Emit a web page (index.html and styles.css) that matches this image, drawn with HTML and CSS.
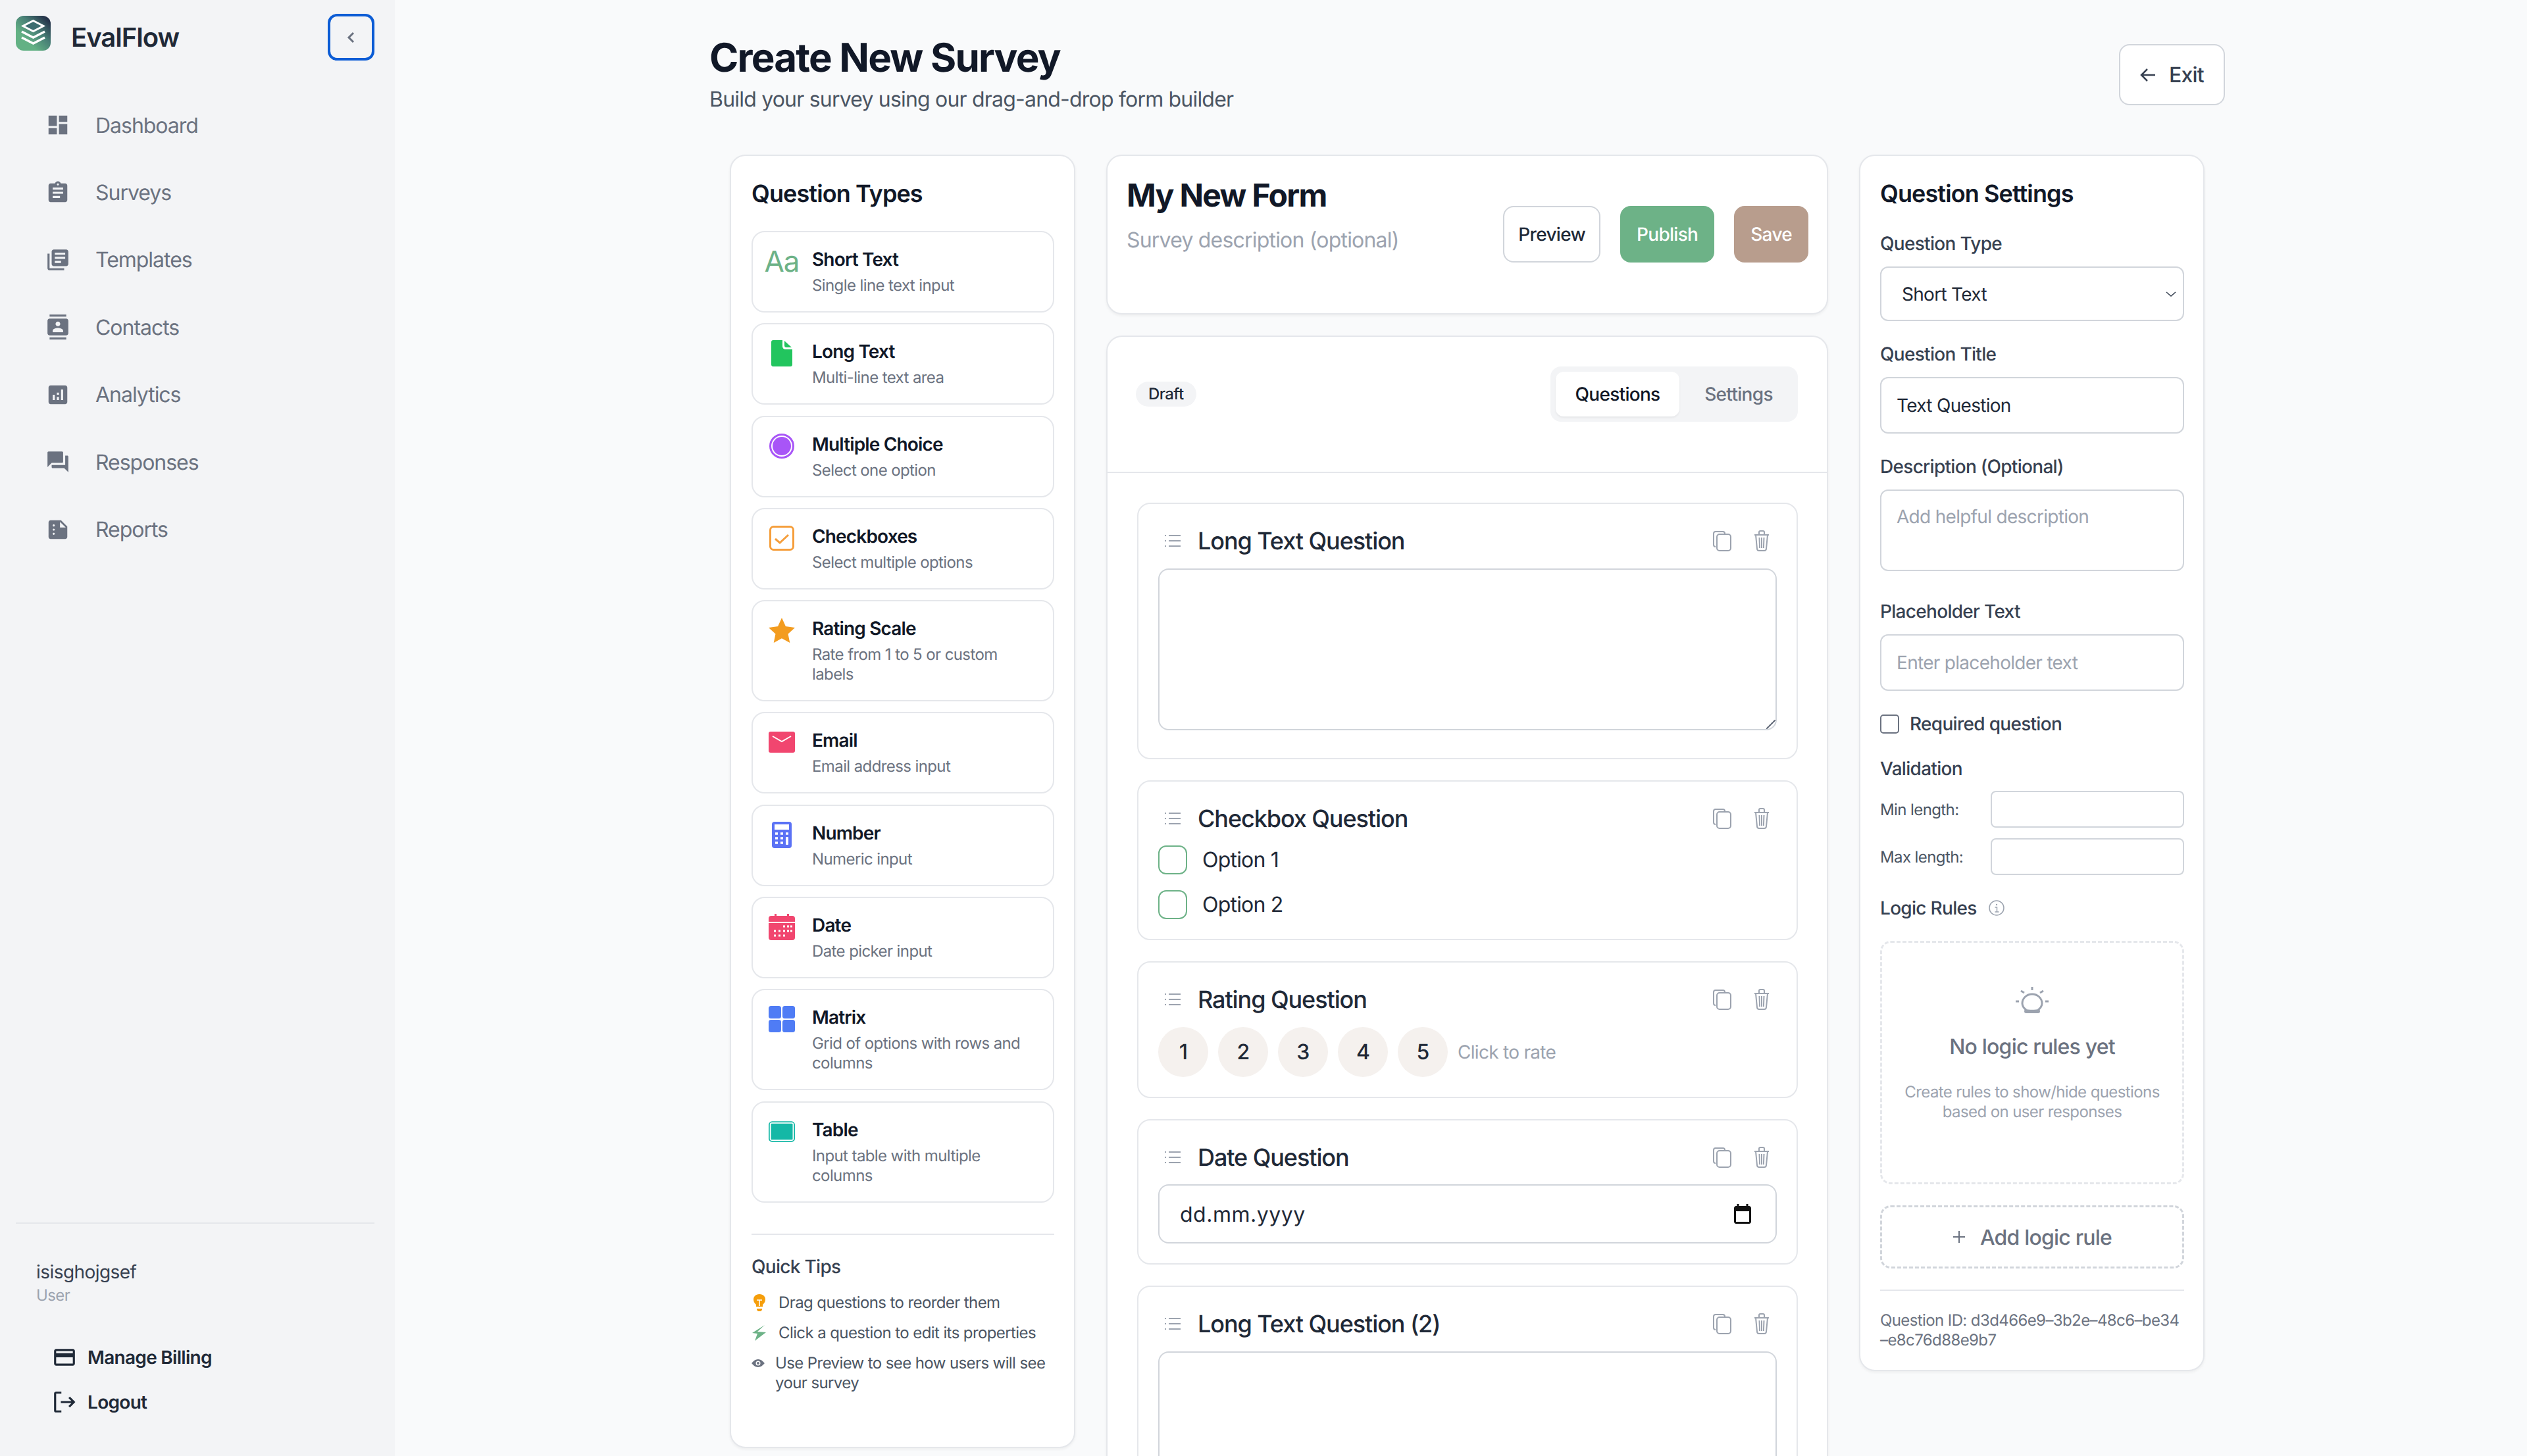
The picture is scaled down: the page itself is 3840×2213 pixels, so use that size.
FILE: index.html
```html
<!DOCTYPE html>
<html lang="en">
<head>
  <meta charset="UTF-8" />
  <meta name="viewport" content="width=device-width, initial-scale=1.0"/>
  <title>Create New Survey - EvalFlow</title>
  <link rel="stylesheet" href="styles.css">
</head>
<body>
  <svg class="defs" aria-hidden="true">
    <symbol id="i-drag" viewBox="0 0 26 26">
      <path d="M1 5h2M1 13h2M1 21h2M7 5h18M7 13h18M7 21h18" fill="none" stroke="#9ca3af" stroke-width="2"/>
    </symbol>
    <symbol id="i-copy" viewBox="0 0 28 32">
      <path d="M4 25c-2 0-3-1-3-3V5c0-2 1-3 3-3h11c2 0 3 1 3 3" fill="none" stroke="#9ca3af" stroke-width="2"/>
      <rect x="6" y="6" width="21" height="25" rx="4" fill="none" stroke="#9ca3af" stroke-width="2"/>
    </symbol>
    <symbol id="i-trash" viewBox="0 0 24 32">
      <path d="M1 7h22M8 7V3c0-1 .6-2 2-2h4c1.400 0 2 1 2 2v4M3 7l2 21c.1 1.500 1 3 3 3h8c2 0 2.900-1.500 3-3l2-21M8.500 11l.6 16M12 11v16M15.500 11l-.6 16" fill="none" stroke="#9ca3af" stroke-width="2"/>
    </symbol>
  </svg>

  <div class="app">
    <aside class="sidebar">
      <div class="brand-row">
        <div class="brand">
          <svg class="logo" viewBox="0 0 53 53">
            <defs>
              <linearGradient id="logo-grad" x1="0" y1="1" x2="1" y2="0">
                <stop offset="0.3" stop-color="#63b184"/>
                <stop offset="0.6" stop-color="#487f76"/>
                <stop offset="0.9" stop-color="#25334a"/>
              </linearGradient>
            </defs>
            <rect width="53" height="53" rx="12" fill="url(#logo-grad)"/>
            <path d="M26.500 7.500L42 15.500 26.500 23.500 11 15.500z" fill="#3c6d70" stroke="#fff" stroke-width="3"/>
            <path d="M9 24l17.500 9L44 24M9 33l17.500 9L44 33" fill="none" stroke="#fff" stroke-width="3.500"/>
          </svg>
          <span class="brand-name">EvalFlow</span>
        </div>
        <button class="collapse-btn">
          <svg width="28" height="28" viewBox="0 0 28 28"><path d="M17 7l-7 7 7 7" fill="none" stroke="#6b7280" stroke-width="3"/></svg>
        </button>
      </div>

      <nav class="nav">
        <a class="nav-item" href="#">
          <svg viewBox="0 0 24 24"><path d="M3 13h8V3H3v10zm0 8h8v-6H3v6zm10 0h8V11h-8v10zm0-18v6h8V3h-8z"/></svg>
          Dashboard
        </a>
        <a class="nav-item" href="#">
          <svg viewBox="0 0 24 24"><path d="M19 3h-4.180C14.400 1.840 13.300 1 12 1c-1.300 0-2.400.84-2.820 2H5c-1.100 0-2 .9-2 2v14c0 1.100.9 2 2 2h14c1.100 0 2-.9 2-2V5c0-1.100-.9-2-2-2zm-7 0c.55 0 1 .45 1 1s-.45 1-1 1-1-.45-1-1 .45-1 1-1zm2 14H7v-2h7v2zm3-4H7v-2h10v2zm0-4H7V7h10v2z"/></svg>
          Surveys
        </a>
        <a class="nav-item" href="#">
          <svg viewBox="0 0 24 24"><path d="M4 6H2v14c0 1.100.9 2 2 2h14v-2H4V6zm16-4H8c-1.100 0-2 .9-2 2v12c0 1.100.9 2 2 2h12c1.100 0 2-.9 2-2V4c0-1.100-.9-2-2-2zm-1 9H9V9h10v2zm-4 4H9v-2h6v2zm4-8H9V5h10v2z"/></svg>
          Templates
        </a>
        <a class="nav-item" href="#">
          <svg viewBox="0 0 24 24"><path d="M20 0H4v2h16V0zM4 24h16v-2H4v2zM20 4H4c-1.100 0-2 .9-2 2v12c0 1.100.9 2 2 2h16c1.100 0 2-.9 2-2V6c0-1.100-.9-2-2-2zm-8 2.750c1.240 0 2.250 1.010 2.250 2.250s-1.010 2.250-2.250 2.250S9.750 10.240 9.750 9 10.760 6.750 12 6.750zM17 17H7v-1.500c0-1.670 3.330-2.500 5-2.500s5 .83 5 2.500V17z"/></svg>
          Contacts
        </a>
        <a class="nav-item" href="#">
          <svg viewBox="0 0 24 24"><path d="M19 3H5c-1.100 0-2 .9-2 2v14c0 1.100.9 2 2 2h14c1.100 0 2-.9 2-2V5c0-1.100-.9-2-2-2zM9 17H7v-5h2v5zm4 0h-2v-3h2v3zm0-5h-2v-2h2v2zm4 5h-2V7h2v10z"/></svg>
          Analytics
        </a>
        <a class="nav-item" href="#">
          <svg viewBox="0 0 24 24"><path d="M21 6h-2v9H6v2c0 .55.45 1 1 1h11l4 4V7c0-.55-.45-1-1-1zm-4 6V3c0-.55-.45-1-1-1H3c-.55 0-1 .45-1 1v14l4-4h10c.55 0 1-.45 1-1z"/></svg>
          Responses
        </a>
        <a class="nav-item" href="#">
          <svg viewBox="0 0 24 24"><path d="M15 3H5c-1.100 0-1.990.9-1.990 2L3 19c0 1.100.89 2 1.990 2H19c1.100 0 2-.9 2-2V9l-6-6zM8 17c-.55 0-1-.45-1-1s.45-1 1-1 1 .45 1 1-.45 1-1 1zm0-4c-.55 0-1-.45-1-1s.45-1 1-1 1 .45 1 1-.45 1-1 1zm0-4c-.55 0-1-.45-1-1s.45-1 1-1 1 .45 1 1-.45 1-1 1zm6 1V4.500l5.500 5.500H14z"/></svg>
          Reports
        </a>
      </nav>

      <div class="sidebar-foot">
        <div class="user-name">isisghojgsef</div>
        <div class="user-role">User</div>
        <a class="foot-link billing" href="#">
          <svg viewBox="0 0 24 24"><path d="M20 4H4c-1.110 0-1.990.89-1.990 2L2 18c0 1.110.89 2 2 2h16c1.110 0 2-.89 2-2V6c0-1.110-.89-2-2-2zm0 14H4v-6h16v6zm0-10H4V6h16v2z"/></svg>
          Manage Billing
        </a>
        <a class="foot-link" href="#">
          <svg viewBox="0 0 24 24"><path d="M9 3H4a1 1 0 0 0-1 1v16a1 1 0 0 0 1 1h5M8.500 12H21M16.500 7.500L21 12l-4.500 4.500" fill="none" stroke="#1f2937" stroke-width="2"/></svg>
          Logout
        </a>
      </div>
    </aside>

    <main class="main">
      <header class="page-head">
        <div>
          <h1>Create New Survey</h1>
          <p class="page-sub">Build your survey using our drag-and-drop form builder</p>
        </div>
        <button class="exit-btn">
          <svg width="24" height="24" viewBox="0 0 24 24"><path d="M23 12H2M11 3l-9 9 9 9" fill="none" stroke="#374151" stroke-width="2.500"/></svg>
          Exit
        </button>
      </header>

      <div class="builder">
        <section class="card types">
          <h2 class="card-title">Question Types</h2>
          <div class="type-list">
            <div class="type-item">
              <span class="type-icon aa">Aa</span>
              <div><div class="type-name">Short Text</div><div class="type-desc">Single line text input</div></div>
            </div>
            <div class="type-item">
              <span class="type-icon"><svg width="32" height="40" viewBox="0 0 32 40"><path d="M3 0h14v9c0 3 2 5 5 5h10v23c0 2-1 3-3 3H3c-2 0-3-1-3-3V3c0-2 1-3 3-3zM20 1l11 10H23c-2 0-3-1-3-3z" fill="#22c55e"/></svg></span>
              <div><div class="type-name">Long Text</div><div class="type-desc">Multi-line text area</div></div>
            </div>
            <div class="type-item">
              <span class="type-icon"><svg width="38" height="38" viewBox="0 0 38 38"><circle cx="19" cy="19" r="17.500" fill="none" stroke="#a855f7" stroke-width="3"/><circle cx="19" cy="19" r="14" fill="#a855f7"/></svg></span>
              <div><div class="type-name">Multiple Choice</div><div class="type-desc">Select one option</div></div>
            </div>
            <div class="type-item">
              <span class="type-icon"><svg width="38" height="38" viewBox="0 0 38 38"><rect x="1.500" y="1.500" width="35" height="35" rx="5" fill="none" stroke="#f59e3b" stroke-width="3"/><path d="M9 20l7 6 13-12" fill="none" stroke="#f59e3b" stroke-width="3"/></svg></span>
              <div><div class="type-name">Checkboxes</div><div class="type-desc">Select multiple options</div></div>
            </div>
            <div class="type-item">
              <span class="type-icon"><svg width="44" height="42" viewBox="0 0 44 42"><path d="M22 0l6.500 14.500L44 16.500 32.500 27l3 15L22 34.500 8.500 42l3-15L0 16.500l15.500-2z" fill="#f39c1f"/></svg></span>
              <div><div class="type-name">Rating Scale</div><div class="type-desc">Rate from 1 to 5 or custom labels</div></div>
            </div>
            <div class="type-item">
              <span class="type-icon"><svg width="40" height="32" viewBox="0 0 40 32"><rect width="40" height="32" rx="3" fill="#f1466f"/><path d="M6 7l14 8 14-8" fill="none" stroke="#fff" stroke-width="2"/></svg></span>
              <div><div class="type-name">Email</div><div class="type-desc">Email address input</div></div>
            </div>
            <div class="type-item">
              <span class="type-icon"><svg width="30" height="40" viewBox="0 0 30 40"><rect width="30" height="40" rx="4" fill="#5b72f5"/><rect x="4" y="4" width="22" height="8" fill="#fff"/><path d="M5 18h4M13 18h4M21 18h4M5 25h4M13 25h4M5 32h4M13 32h4" stroke="#fff" stroke-width="3.500"/><rect x="21" y="23" width="4" height="12" rx="1" fill="#fff"/></svg></span>
              <div><div class="type-name">Number</div><div class="type-desc">Numeric input</div></div>
            </div>
            <div class="type-item">
              <span class="type-icon"><svg width="40" height="40" viewBox="0 0 40 40"><path d="M4 3h32c2.500 0 4 1.500 4 4v5H0V7c0-2.500 1.500-4 4-4zM0 14h40v22c0 2.500-1.500 4-4 4H4c-2.500 0-4-1.500-4-4z" fill="#f1466f"/><rect x="9" y="0" width="3" height="5" fill="#f1466f"/><rect x="28" y="0" width="3" height="5" fill="#f1466f"/><path d="M22 19h3M28 19h3M33 19h3M8 26h3M15 26h3M22 26h3M28 26h3M33 26h3M8 33h3M15 33h3M22 33h3" stroke="#fff" stroke-width="3"/></svg></span>
              <div><div class="type-name">Date</div><div class="type-desc">Date picker input</div></div>
            </div>
            <div class="type-item">
              <span class="type-icon"><svg width="40" height="40" viewBox="0 0 40 40"><g fill="#4f7cf5"><rect width="19" height="19" rx="3.500"/><rect x="21" width="19" height="19" rx="3.500"/><rect y="21" width="19" height="19" rx="3.500"/><rect x="21" y="21" width="19" height="19" rx="3.500"/></g></svg></span>
              <div><div class="type-name">Matrix</div><div class="type-desc">Grid of options with rows and columns</div></div>
            </div>
            <div class="type-item">
              <span class="type-icon"><svg width="46" height="36" viewBox="0 0 46 36"><rect x="1" y="1" width="44" height="34" rx="5" fill="none" stroke="#14b8a6" stroke-width="2"/><rect x="4" y="4" width="38" height="28" rx="1" fill="#14b8a6"/></svg></span>
              <div><div class="type-name">Table</div><div class="type-desc">Input table with multiple columns</div></div>
            </div>
          </div>

          <div class="tips">
            <h3 class="tips-title">Quick Tips</h3>
            <div class="tip">
              <svg width="24" height="26" viewBox="0 0 24 26"><path d="M12 0c6 0 9 4 9 8s-2 6-4 8v3H7v-3c-2-2-4-4-4-8s3-8 9-8z" fill="#f59e0b"/><path d="M8 9h8M12 9v9" stroke="#fff" stroke-width="1.500"/><path d="M8 22h8v2l-2 2h-4l-2-2z" fill="#f59e0b"/></svg>
              <span>Drag questions to reorder them</span>
            </div>
            <div class="tip">
              <svg width="24" height="24" viewBox="0 0 24 24"><path d="M20 0L9 10l13 1L5 24l4-11L1 12z" fill="#6db287"/></svg>
              <span>Click a question to edit its properties</span>
            </div>
            <div class="tip tip-eye">
              <svg width="20" height="14" viewBox="0 0 20 14"><path d="M10 1c5 0 8 4 10 6-2 2-5 6-10 6S2 9 0 7c2-2 5-6 10-6z" fill="#6b7280"/><circle cx="10" cy="7" r="3.500" fill="#fff"/><circle cx="10" cy="7" r="2" fill="#6b7280"/></svg>
              <span>Use Preview to see how users will see your survey</span>
            </div>
          </div>
        </section>

        <div class="center">
          <section class="card form-head">
            <div>
              <h2 class="form-title">My New Form</h2>
              <p class="form-desc">Survey description (optional)</p>
            </div>
            <div class="form-actions">
              <button class="btn btn-plain">Preview</button>
              <button class="btn btn-green">Publish</button>
              <button class="btn btn-tan">Save</button>
            </div>
          </section>

          <section class="card editor">
            <div class="editor-bar">
              <span class="draft">Draft</span>
              <div class="tabs">
                <span class="tab active">Questions</span>
                <span class="tab">Settings</span>
              </div>
            </div>

            <div class="question-list">
              <div class="question">
                <div class="q-head">
                  <svg class="q-drag"><use href="#i-drag"/></svg>
                  <span class="q-title">Long Text Question</span>
                  <svg class="q-copy"><use href="#i-copy"/></svg>
                  <svg class="q-trash"><use href="#i-trash"/></svg>
                </div>
                <textarea class="q-area"></textarea>
              </div>

              <div class="question">
                <div class="q-head">
                  <svg class="q-drag"><use href="#i-drag"/></svg>
                  <span class="q-title">Checkbox Question</span>
                  <svg class="q-copy"><use href="#i-copy"/></svg>
                  <svg class="q-trash"><use href="#i-trash"/></svg>
                </div>
                <div class="option"><span class="option-box"></span>Option 1</div>
                <div class="option"><span class="option-box"></span>Option 2</div>
              </div>

              <div class="question">
                <div class="q-head">
                  <svg class="q-drag"><use href="#i-drag"/></svg>
                  <span class="q-title">Rating Question</span>
                  <svg class="q-copy"><use href="#i-copy"/></svg>
                  <svg class="q-trash"><use href="#i-trash"/></svg>
                </div>
                <div class="rating">
                  <span class="rate">1</span>
                  <span class="rate">2</span>
                  <span class="rate">3</span>
                  <span class="rate">4</span>
                  <span class="rate">5</span>
                  <span class="rate-hint">Click to rate</span>
                </div>
              </div>

              <div class="question">
                <div class="q-head">
                  <svg class="q-drag"><use href="#i-drag"/></svg>
                  <span class="q-title">Date Question</span>
                  <svg class="q-copy"><use href="#i-copy"/></svg>
                  <svg class="q-trash"><use href="#i-trash"/></svg>
                </div>
                <div class="date-input">
                  <span>dd.mm.yyyy</span>
                  <svg width="26" height="30" viewBox="0 0 26 30"><path d="M6 0v4M20 0v4" stroke="#111" stroke-width="3"/><path d="M3 3h20c1.500 0 3 1.500 3 3v21c0 1.500-1.500 3-3 3H3c-1.500 0-3-1.500-3-3V6c0-1.500 1.500-3 3-3zm0 8v16h20V11z" fill="#111"/></svg>
                </div>
              </div>

              <div class="question">
                <div class="q-head">
                  <svg class="q-drag"><use href="#i-drag"/></svg>
                  <span class="q-title">Long Text Question (2)</span>
                  <svg class="q-copy"><use href="#i-copy"/></svg>
                  <svg class="q-trash"><use href="#i-trash"/></svg>
                </div>
                <textarea class="q-area"></textarea>
              </div>
            </div>
          </section>
        </div>

        <section class="card settings">
          <h2 class="card-title settings-title">Question Settings</h2>

          <div class="field">
            <label class="field-label">Question Type</label>
            <div class="select">
              <span>Short Text</span>
              <svg width="16" height="10" viewBox="0 0 16 10"><path d="M1 2l7 6 7-6" fill="none" stroke="#374151" stroke-width="1.500"/></svg>
            </div>
          </div>
          <div class="field">
            <label class="field-label">Question Title</label>
            <input class="text-input" type="text" value="Text Question">
          </div>
          <div class="field">
            <label class="field-label">Description (Optional)</label>
            <textarea class="text-input text-area" placeholder="Add helpful description"></textarea>
          </div>
          <div class="field">
            <label class="field-label">Placeholder Text</label>
            <input class="text-input" type="text" placeholder="Enter placeholder text">
          </div>
          <div class="check-row">
            <span class="check-box"></span>
            <span class="field-label">Required question</span>
          </div>
          <div class="validation">
            <div class="field-label">Validation</div>
            <div class="valid-row"><span>Min length:</span><input class="valid-input" type="text"></div>
            <div class="valid-row"><span>Max length:</span><input class="valid-input" type="text"></div>
          </div>
          <div class="logic-head">
            <span class="field-label">Logic Rules</span>
            <svg width="24" height="24" viewBox="0 0 24 24"><circle cx="12" cy="12" r="11" fill="none" stroke="#9ca3af" stroke-width="1.500"/><path d="M9.500 11H12.500V18M9.500 18h6" fill="none" stroke="#9ca3af" stroke-width="1.500"/><circle cx="12" cy="7" r="1.200" fill="#9ca3af"/></svg>
          </div>
          <div class="logic-empty">
            <svg width="50" height="40" viewBox="0 0 50 40"><path d="M16 35c-4-3-6-6-6-10 0-8 7-14 15-14s15 6 15 14c0 4-2 7-6 10" fill="none" stroke="#9ca3af" stroke-width="3"/><path d="M13 37c0-2 1-3 3-3 3 1 15 1 18 0 2 0 3 1 3 3 0 2-1 3-3 3H16c-2 0-3-1-3-3z" fill="#9ca3af"/><path d="M25 0v5M8 6l5 3M42 6l-5 3M0 22h5M45 22h5" stroke="#9ca3af" stroke-width="3"/></svg>
            <div class="logic-none">No logic rules yet</div>
            <div class="logic-help">Create rules to show/hide questions based on user responses</div>
          </div>
          <button class="add-rule">
            <svg width="20" height="20" viewBox="0 0 20 20"><path d="M10 1v18M1 10h18" stroke="#6b7280" stroke-width="2"/></svg>
            Add logic rule
          </button>
          <div class="question-id">Question ID: d3d466e9–3b2e–48c6–be34 –e8c76d88e9b7</div>
        </section>
      </div>
    </main>
  </div>
</body>
</html>
```

FILE: styles.css
```css
* {
  margin: 0;
  padding: 0;
  box-sizing: border-box;
  text-rendering: geometricPrecision;
  letter-spacing: -0.025em;
}

html, body {
  height: 100%;
  overflow: hidden;
}

body {
  font-family: Inter, "Noto Sans", sans-serif;
  background: #f9fafb;
  color: #111827;
}

.defs {
  display: none;
}

.app {
  display: flex;
  height: 2213px;
}

button, input, textarea {
  font-family: inherit;
}

/* sidebar */
.sidebar {
  width: 600px;
  flex-shrink: 0;
  display: flex;
  flex-direction: column;
  background: #f3f4f6;
  padding: 21px 31px 48px 24px;
}

.brand-row {
  display: flex;
  justify-content: space-between;
  align-items: center;
  margin-bottom: 47px;
}

.brand {
  display: flex;
  align-items: center;
  gap: 31px;
}

.logo {
  width: 53px;
  height: 53px;
  margin-top: -13px;
}

.brand-name {
  font-size: 40px;
  font-weight: 600;
  color: #1f2937;
}

.collapse-btn {
  width: 71px;
  height: 71px;
  display: flex;
  align-items: center;
  justify-content: center;
  background: transparent;
  border: 4px solid #0b5cd5;
  border-radius: 14px;
}

.nav-item {
  display: flex;
  align-items: center;
  gap: 38px;
  height: 102.4px;
  padding-left: 45px;
  font-size: 32px;
  letter-spacing: -0.032em;
  color: #6b7280;
  text-decoration: none;
}

.nav-item svg {
  width: 38px;
  height: 38px;
  fill: #6b7280;
}

.sidebar-foot {
  margin-top: auto;
  padding: 53px 0 0 31px;
  border-top: 2px solid #e5e7eb;
}

.user-name {
  font-size: 28px;
  line-height: 40px;
  letter-spacing: -0.02em;
  color: #374151;
}

.user-role {
  font-size: 24px;
  line-height: 32px;
  color: #9ca3af;
}

.foot-link {
  display: flex;
  align-items: center;
  gap: 16px;
  height: 68px;
  margin-left: 24px;
  font-size: 28px;
  font-weight: 600;
  color: #1f2937;
  text-decoration: none;
}

.foot-link.billing {
  margin-top: 44px;
}

.foot-link svg {
  width: 38px;
  height: 38px;
  fill: #1f2937;
}

/* page header */
.main {
  flex: 1;
  padding: 52px 459px 0 478px;
  overflow: hidden;
}

.page-head {
  display: flex;
  justify-content: space-between;
  align-items: center;
  margin-bottom: 60px;
}

h1 {
  font-size: 60px;
  line-height: 72px;
  font-weight: 700;
  letter-spacing: -0.03em;
}

.page-sub {
  margin-top: 3px;
  font-size: 32px;
  line-height: 48px;
  color: #4b5563;
}

.exit-btn {
  display: flex;
  align-items: center;
  gap: 20px;
  width: 161px;
  height: 93px;
  justify-content: center;
  background: #fff;
  border: 2px solid #d1d5db;
  border-radius: 16px;
  font-size: 32px;
  font-weight: 500;
  color: #374151;
}

.builder {
  display: grid;
  grid-template-columns: 525px 1097px 525px;
  column-gap: 47px;
  align-items: start;
  width: 2241px;
  margin-left: 31px;
}

.card {
  background: #fff;
  border: 2px solid #e5e7eb;
  border-radius: 24px;
  box-shadow: 0 2px 4px rgba(0,0,0,0.05);
}

.card-title {
  font-size: 36px;
  line-height: 44px;
  font-weight: 600;
}

/* question types */
.types {
  padding: 35px 30px 82px 31px;
}

.type-list {
  display: flex;
  flex-direction: column;
  gap: 16.3px;
  margin-top: 35px;
}

.type-item {
  display: flex;
  padding: 22px 24px 24px 24px;
  border: 2px solid #e5e7eb;
  border-radius: 20px;
}

.type-icon {
  flex-shrink: 0;
  width: 40px;
  height: 44px;
  margin-right: 26px;
  display: flex;
  align-items: center;
  justify-content: center;
}

.type-icon.aa {
  font-size: 44px;
  color: #6db287;
}

.type-name {
  font-size: 28px;
  line-height: 38px;
  font-weight: 600;
  letter-spacing: -0.03em;
}

.type-desc {
  margin-top: 6px;
  font-size: 24px;
  line-height: 30px;
  color: #6b7280;
}

.tips {
  margin-top: 47px;
  padding-top: 30px;
  border-top: 2px solid #e5e7eb;
}

.tips-title {
  font-size: 28px;
  line-height: 36px;
  font-weight: 500;
  color: #374151;
  margin-bottom: 22px;
}

.tip {
  display: flex;
  align-items: center;
  gap: 17px;
  margin-top: 16px;
  font-size: 24px;
  line-height: 30px;
  color: #4b5563;
}

.tip svg {
  flex-shrink: 0;
}

.tip-eye {
  align-items: flex-start;
  gap: 16px;
}

.tip-eye svg {
  margin-top: 8px;
}

/* form header */
.form-head {
  display: flex;
  justify-content: space-between;
  padding: 31px 28px 77px 29px;
  margin-bottom: 32px;
}

.form-title {
  font-size: 48px;
  line-height: 58px;
  font-weight: 700;
  letter-spacing: -0.035em;
}

.form-desc {
  margin-top: 15px;
  font-size: 32px;
  line-height: 48px;
  color: #9ca3af;
}

.form-actions {
  display: flex;
  gap: 30px;
  margin-top: 45px;
}

.btn {
  height: 86px;
  padding: 0 25px;
  border: none;
  border-radius: 16px;
  font-size: 28px;
  font-weight: 500;
  color: #fff;
}

.btn-plain {
  padding: 0 21px;
  background: #fff;
  border: 2px solid #d1d5db;
  color: #1f2937;
}

.btn-green {
  background: #6db287;
}

.btn-tan {
  background: #b89d8d;
}

/* question editor */
.editor {
  border-bottom: none;
}

.editor-bar {
  display: flex;
  justify-content: space-between;
  align-items: center;
  padding: 45px 44px 76px 43px;
  border-bottom: 2px solid #e5e7eb;
}

.draft {
  padding: 0 19px;
  height: 38px;
  line-height: 38px;
  background: #f3f4f6;
  border-radius: 19px;
  font-size: 24px;
  font-weight: 500;
  color: #1f2937;
}

.tabs {
  display: flex;
  width: 376px;
  height: 84px;
  padding: 8px;
  background: #f3f4f6;
  border-radius: 16px;
}

.tab {
  display: flex;
  flex: 1;
  align-items: center;
  justify-content: center;
  padding-left: 8px;
  font-size: 28px;
  font-weight: 500;
  color: #6b7280;
}

.tab.active {
  flex: none;
  width: 188px;
  padding-left: 0;
  background: #fff;
  border-radius: 12px;
  color: #111827;
  box-shadow: 0 2px 3px rgba(0,0,0,0.06);
}

.question-list {
  display: flex;
  flex-direction: column;
  gap: 32px;
  padding: 45px 44px 0 45px;
}

.question {
  padding: 31px 30px 30px;
  border: 2px solid #e5e7eb;
  border-radius: 20px;
}

.q-head {
  display: flex;
  align-items: center;
  height: 50px;
  margin-bottom: 16.5px;
}

.q-drag {
  width: 26px;
  height: 26px;
  margin: 0 25px 0 9px;
}

.q-title {
  flex: 1;
  font-size: 36px;
  font-weight: 500;
  letter-spacing: -0.03em;
  color: #1f2937;
}

.q-copy {
  width: 28px;
  height: 32px;
  margin-right: 34px;
}

.q-trash {
  width: 24px;
  height: 32px;
  margin-right: 11px;
}

.q-area {
  display: block;
  width: 100%;
  height: 246px;
  margin-bottom: 12px;
  border: 2px solid #d1d5db;
  border-radius: 16px;
  resize: none;
  background: #fff linear-gradient(-45deg, transparent 3px, #6b7280 3px, #6b7280 5px, transparent 5px, transparent 9px, #6b7280 9px, #6b7280 11px, transparent 11px) no-repeat right bottom / 14px 14px;
}

.option {
  display: flex;
  align-items: center;
  gap: 23px;
  margin-bottom: 24px;
  font-size: 32px;
  line-height: 44px;
  color: #1f2937;
}

.option:last-child {
  margin-bottom: 0;
}

.option-box {
  width: 44px;
  height: 44px;
  border: 2px solid #6db287;
  border-radius: 12px;
}

.rating {
  display: flex;
  align-items: center;
  gap: 15px;
}

.rate {
  display: flex;
  align-items: center;
  justify-content: center;
  width: 76px;
  height: 76px;
  background: #f5f1ee;
  border-radius: 50%;
  font-size: 32px;
  font-weight: 500;
  color: #1f2937;
}

.rate-hint {
  font-size: 28px;
  color: #9ca3af;
}

.date-input {
  display: flex;
  align-items: center;
  justify-content: space-between;
  height: 90px;
  padding: 0 37px 0 31px;
  border: 2px solid #d1d5db;
  border-radius: 16px;
  font-size: 32px;
  color: #1f2937;
}

.date-input span {
  letter-spacing: 0.5px;
}

/* question settings */
.settings {
  padding: 35px 29px 30px 30px;
}

.settings-title {
  margin-bottom: 36px;
}

.field {
  margin-bottom: 32px;
}

.field-label {
  display: block;
  font-size: 28px;
  line-height: 36px;
  font-weight: 500;
  color: #374151;
}

.field .field-label {
  margin-bottom: 17px;
}

.select {
  display: flex;
  align-items: center;
  justify-content: space-between;
  height: 83px;
  padding: 0 10px 0 31px;
  border: 2px solid #d1d5db;
  border-radius: 12px;
  font-size: 28px;
  color: #1f2937;
}

.text-input {
  display: block;
  width: 100%;
  height: 86px;
  padding: 0 23px;
  background: #fff;
  border: 2px solid #d1d5db;
  border-radius: 12px;
  font-size: 28px;
  color: #1f2937;
}

.text-area {
  height: 124px;
  padding-top: 22px;
  margin-bottom: 43px;
  resize: none;
}

.text-input::placeholder {
  color: #9ca3af;
}

.check-row {
  display: flex;
  align-items: center;
  gap: 16px;
  margin-bottom: 32px;
}

.check-box {
  width: 29px;
  height: 29px;
  background: #fff;
  border: 2px solid #6b7280;
  border-radius: 5px;
}

.valid-row {
  display: flex;
  align-items: center;
  justify-content: space-between;
  margin-top: 16px;
  font-size: 24px;
  color: #4b5563;
}

.valid-input {
  width: 294px;
  height: 56px;
  background: #fff;
  border: 2px solid #d1d5db;
  border-radius: 8px;
}

.logic-head {
  display: flex;
  align-items: center;
  gap: 18px;
  margin: 32px 0;
}

.logic-empty {
  display: flex;
  flex-direction: column;
  align-items: center;
  height: 370px;
  padding: 67px 20px 0;
  border: 3px dashed #e5e7eb;
  border-radius: 16px;
  text-align: center;
}

.logic-none {
  margin-top: 27px;
  font-size: 32px;
  line-height: 48px;
  font-weight: 500;
  color: #6b7280;
}

.logic-help {
  margin-top: 30px;
  font-size: 24px;
  line-height: 30px;
  color: #9ca3af;
}

.add-rule {
  display: flex;
  align-items: center;
  justify-content: center;
  gap: 22px;
  width: 100%;
  height: 96px;
  margin-top: 32px;
  background: #fff;
  border: 3px dashed #d1d5db;
  border-radius: 16px;
  font-size: 32px;
  font-weight: 500;
  color: #6b7280;
}

.question-id {
  margin-top: 32px;
  padding-top: 30px;
  border-top: 2px solid #e5e7eb;
  font-size: 24px;
  line-height: 30px;
  color: #6b7280;
}
```
